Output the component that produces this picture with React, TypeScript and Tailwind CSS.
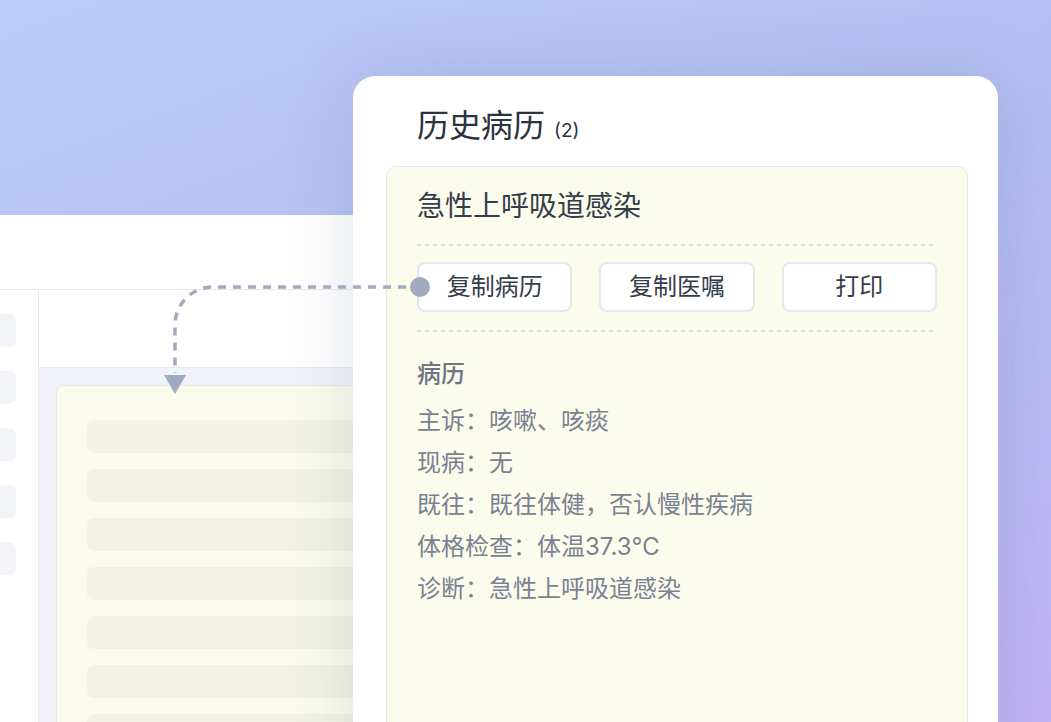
import React from "react";

const FONT = { fontFamily: 'Inter, "Noto Sans CJK SC", sans-serif' };

const RECORD_LINES = [
  "主诉：咳嗽、咳痰",
  "现病：无",
  "既往：既往体健，否认慢性疾病",
  "体格检查：体温37.3℃",
  "诊断：急性上呼吸道感染",
];

const ACTIONS = ["复制病历", "复制医嘱", "打印"];

function DottedRule() {
  return (
    <div className="h-[2px] w-full bg-[repeating-linear-gradient(to_right,#dfe2ea_0_4px,transparent_4px_8px)]" />
  );
}

function BackWindow() {
  return (
    <div className="mt-[215px] flex h-[507px] w-[720px] flex-col overflow-hidden bg-white">
      <div className="h-[75px] shrink-0 border-b border-[#e6e8ee]" />
      <div className="flex min-h-0 flex-1">
        <div className="flex w-[39px] shrink-0 flex-col gap-[24px] border-r border-[#e6e8ee] pt-[24px]">
          {[0, 1, 2, 3, 4].map((i) => (
            <div key={i} className="-ml-[20px] h-[33px] w-[36px] shrink-0 rounded-[7px] bg-[#f3f4f7]" />
          ))}
        </div>
        <div className="flex min-h-0 flex-1 flex-col">
          <div className="h-[78px] shrink-0 border-b border-[#e6e8ee]" />
          <div className="min-h-0 flex-1 bg-[#f1f3f8] pl-[17px] pt-[17px]">
            <div className="h-[400px] rounded-t-[7px] border border-[#e4e6ec] bg-[#fbfcec] px-[30px] pt-[34px]">
              <div className="flex flex-col gap-[16px]">
                {[0, 1, 2, 3, 4, 5, 6].map((i) => (
                  <div key={i} className="h-[33px] shrink-0 rounded-[7px] bg-[#f2f3e2]" />
                ))}
              </div>
            </div>
          </div>
        </div>
      </div>
    </div>
  );
}

function HistoryPanel() {
  return (
    <div className="absolute left-[353px] top-[76px] bottom-[-40px] flex w-[645px] flex-col rounded-[22px] bg-white pl-[33px] pr-[30px] pt-[30px] shadow-[0_0_70px_rgba(70,80,130,0.16)]">
      <div className="mb-[15px] flex items-baseline pl-[31px] leading-[40px]">
        <span className="text-[32px] text-[#2b3240]">历史病历</span>
        <span className="ml-[9px] text-[19px] text-[#2b3240]">(2)</span>
      </div>
      <div className="flex-1 rounded-[10px] border border-[#e3e6ee] bg-[#fbfcec] px-[30px] pt-[21px]">
        <div className="text-[28px] leading-[36px] text-[#353d4b]">急性上呼吸道感染</div>
        <div className="mt-[20px]">
          <DottedRule />
        </div>
        <div className="mt-[16px] grid grid-cols-3 gap-[27px]">
          {ACTIONS.map((label) => (
            <button
              key={label}
              className="flex h-[50px] items-center justify-center rounded-[8px] border-2 border-[#e4e7ee] bg-white text-[24px] text-[#353d4b]"
            >
              {label}
            </button>
          ))}
        </div>
        <div className="mt-[18px]">
          <DottedRule />
        </div>
        <div className="mt-[24px] text-[24px] font-medium leading-[36px] text-[#6f7586]">病历</div>
        <div className="mt-[8px] flex flex-col text-[24px] leading-[42px] text-[#7b8193]">
          {RECORD_LINES.map((line) => (
            <div key={line}>{line}</div>
          ))}
        </div>
      </div>
    </div>
  );
}

function Connector() {
  return (
    <svg className="pointer-events-none absolute inset-0" width="1051" height="722" viewBox="0 0 1051 722">
      <path
        d="M 406 287 H 213 A 38 38 0 0 0 175 325 V 373"
        fill="none"
        stroke="#a0abbd"
        strokeWidth="3.5"
        strokeDasharray="8 7"
      />
      <path d="M 164 375 L 186 375 L 175 394 Z" fill="#a0abbd" />
      <circle cx="420" cy="287" r="10" fill="#a0abbd" />
    </svg>
  );
}

export default function App() {
  return (
    <div
      className="relative h-[722px] w-[1051px] overflow-hidden bg-[linear-gradient(160deg,#bdccfa_0%,#b2bef0_45%,#c1b3f4_100%)]"
      style={FONT}
    >
      <BackWindow />
      <HistoryPanel />
      <Connector />
    </div>
  );
}
